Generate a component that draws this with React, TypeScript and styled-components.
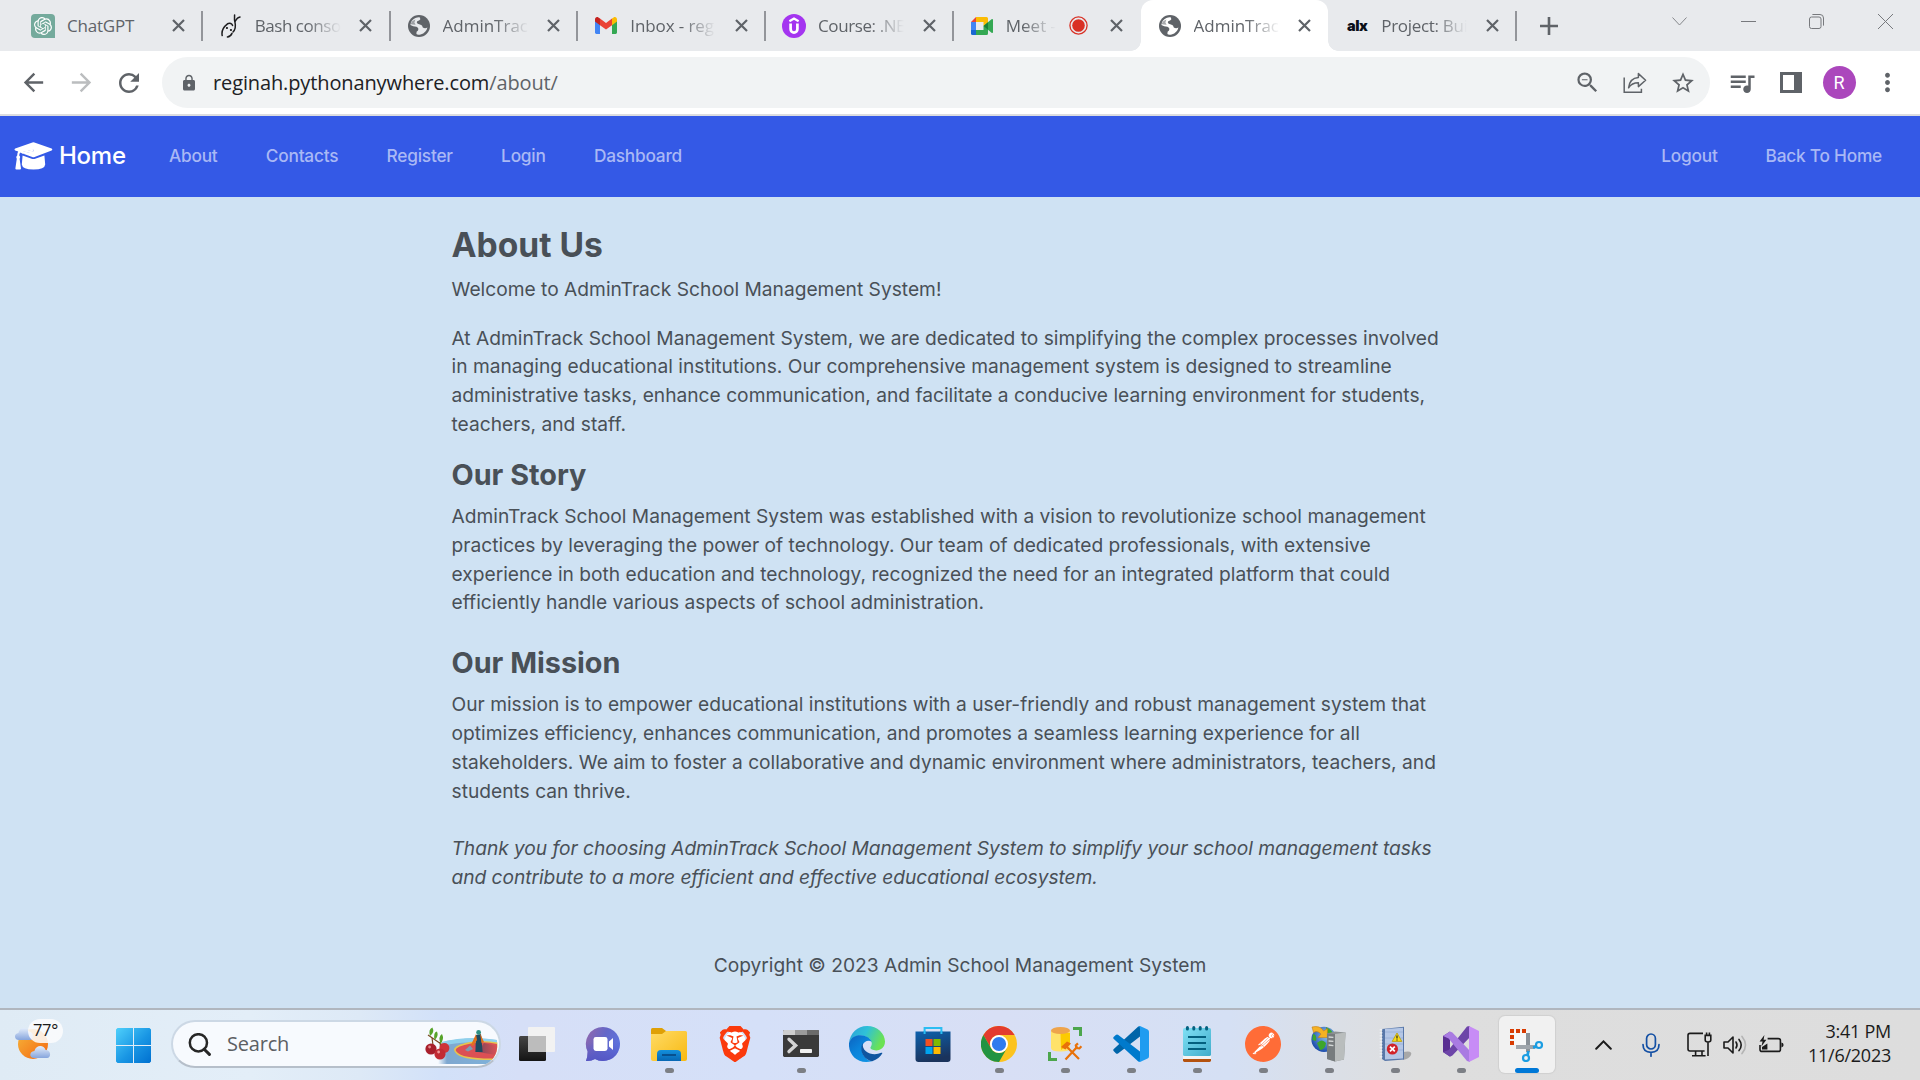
import React from "react";
import styled, { createGlobalStyle, css } from "styled-components";
import { SiOpenai, SiBrave, SiPostman } from "react-icons/si";
import {
  MdArrowBack,
  MdArrowForward,
  MdRefresh,
  MdLock,
  MdZoomOut,
  MdStarBorder,
  MdQueueMusic,
  MdMoreVert,
} from "react-icons/md";

const GlobalStyle = createGlobalStyle`
  * { box-sizing: border-box; }
  html, body { margin: 0; padding: 0; }
  body { width: 1920px; height: 1080px; overflow: hidden; }
  svg { display: block; flex: none; }
`;

const UI_FONT = `"Open Sans", "Noto Sans", sans-serif`;

const Screen = styled.div`
  width: 1920px;
  height: 1080px;
  display: flex;
  flex-direction: column;
  overflow: hidden;
  background: #cfe2f3;
`;

/* ---------- Tab strip ---------- */

const TabStrip = styled.div`
  height: 51px;
  flex: none;
  display: flex;
  background: #e8eaed;
  padding-left: 14px;
`;

const Tab = styled.div<{ $active?: boolean; $divider?: boolean }>`
  position: relative;
  width: 187.75px;
  height: 51px;
  flex: none;
  display: flex;
  align-items: center;
  padding-left: 15px;
  font-family: ${UI_FONT};
  font-size: 17px;
  color: #5f6368;
  ${(p) =>
    p.$divider &&
    css`
      &::after {
        content: "";
        position: absolute;
        right: -1px;
        top: 11px;
        width: 2px;
        height: 30px;
        background: #93959a;
      }
    `}
  ${(p) =>
    p.$active &&
    css`
      background: #fff;
      border-radius: 12px 12px 0 0;
      &::before,
      &::after {
        content: "";
        position: absolute;
        bottom: 0;
        width: 10px;
        height: 10px;
      }
      &::before {
        left: -10px;
        background: radial-gradient(circle at 0 0, transparent 9.5px, #fff 10px);
      }
      &::after {
        right: -10px;
        background: radial-gradient(circle at 100% 0, transparent 9.5px, #fff 10px);
      }
    `}
`;

const Favicon = styled.div`
  width: 28px;
  height: 26px;
  flex: none;
  display: flex;
  align-items: center;
  justify-content: center;
`;

const TabTitle = styled.div<{ $width: number; $fade: boolean; $spacing: number }>`
  margin-left: 10px;
  width: ${(p) => p.$width}px;
  line-height: 26px;
  white-space: nowrap;
  overflow: hidden;
  letter-spacing: ${(p) => p.$spacing}px;
  ${(p) =>
    p.$fade &&
    css`
      mask-image: linear-gradient(90deg, #000 calc(100% - 34px), transparent 100%);
    `}
`;

const RecordingSlot = styled.div`
  width: 36px;
  padding-left: 9px;
  display: flex;
  justify-content: center;
`;

const TabClose = styled.div`
  width: 24px;
  margin-left: 13px;
  display: flex;
  justify-content: center;
`;

const NewTab = styled.div`
  width: 66px;
  height: 51px;
  display: flex;
  align-items: center;
  justify-content: center;
`;

const WindowControls = styled.div`
  margin-left: auto;
  height: 43px;
  display: flex;
  align-items: center;
`;

const WindowButton = styled.div`
  width: 68.7px;
  display: flex;
  justify-content: center;
`;

/* ---------- Toolbar ---------- */

const Toolbar = styled.div`
  height: 65px;
  flex: none;
  display: flex;
  align-items: center;
  background: #fff;
  border-bottom: 2px solid #dcdde0;
  color: #5f6368;
  padding-left: 9px;
`;

const ToolButton = styled.div<{ $width?: number; $dim?: boolean }>`
  width: ${(p) => p.$width ?? 48}px;
  display: flex;
  justify-content: center;
  color: ${(p) => (p.$dim ? "#bbbdbf" : "#5f6368")};
`;

const Omnibox = styled.div`
  margin-left: 9px;
  width: 1548px;
  height: 51px;
  border-radius: 26px;
  background: #f1f3f4;
  display: flex;
  align-items: center;
  padding: 0 3px 0 15px;
  font-family: ${UI_FONT};
`;

const Url = styled.div`
  margin-left: 12px;
  flex: 1;
  font-size: 20px;
  line-height: 28px;
  letter-spacing: -0.12px;
  color: #202124;
  white-space: nowrap;
`;

const UrlPath = styled.span`
  color: #5f6368;
`;

const Avatar = styled.div`
  width: 33px;
  height: 33px;
  border-radius: 50%;
  background: #ab47bc;
  color: #fff;
  font-family: Roboto, sans-serif;
  font-size: 18px;
  line-height: 34px;
  text-align: center;
`;

/* ---------- Site ---------- */

const Navbar = styled.nav`
  height: 81px;
  flex: none;
  display: flex;
  align-items: center;
  background: #3459e6;
  padding: 0 38px 2px 14px;
  font-family: Inter, sans-serif;
`;

const Brand = styled.div`
  display: flex;
  align-items: center;
  gap: 6px;
  width: 131px;
  color: #fff;
  font-size: 24px;
  font-weight: 500;
  letter-spacing: -0.25px;
  line-height: 36px;
`;

const NavLinks = styled.div<{ $right?: boolean }>`
  display: flex;
  gap: ${(p) => (p.$right ? 48 : 48.3)}px;
  margin-left: ${(p) => (p.$right ? "auto" : "24px")};
`;

const NavLink = styled.a`
  color: #a9b8f5;
  font-size: 17.28px;
  font-weight: 500;
  line-height: 26px;
  letter-spacing: -0.22px;
  white-space: nowrap;
`;

const Page = styled.main`
  height: 811px;
  flex: none;
  background: #cfe2f3;
  padding: 28px 0 0 451.5px;
  font-family: Inter, sans-serif;
  font-size: 19.2px;
  line-height: 28.8px;
  color: #495057;
`;

const Heading = styled.h2<{ $size: number }>`
  margin: 0 0 9.6px;
  font-size: ${(p) => p.$size}px;
  font-weight: 700;
  line-height: 1.2;
`;

const Paragraph = styled.p<{ $gap: number; $italic?: boolean }>`
  margin: 0 0 ${(p) => p.$gap}px;
  font-style: ${(p) => (p.$italic ? "italic" : "normal")};
  letter-spacing: ${(p) => (p.$italic ? "-0.05px" : "normal")};
`;

const Line = styled.span`
  display: block;
  white-space: nowrap;
`;

const Footer = styled.footer`
  padding-top: 59px;
  margin-left: -451.5px;
  text-align: center;
`;

/* ---------- Taskbar ---------- */

const Taskbar = styled.div`
  height: 72px;
  flex: none;
  display: flex;
  align-items: center;
  border-top: 2px solid #b0b6be;
  background: linear-gradient(
    90deg,
    #dfebf5 0,
    #e3eef8 250px,
    #dde9f6 360px,
    #d2e1f9 440px,
    #d6dff7 520px,
    #d5e0f8 760px,
    #d8dff5 1000px,
    #d5e0f4 1230px,
    #dbdfe6 1340px,
    #dedede 1420px,
    #dddddd 1920px
  );
  font-family: ${UI_FONT};
`;

const Weather = styled.div`
  position: relative;
  width: 108px;
  padding-left: 14px;
`;

const Temperature = styled.div`
  position: absolute;
  left: 28px;
  top: -8px;
  width: 35px;
  height: 24px;
  border-radius: 12px;
  background: rgba(252, 252, 253, 0.86);
  font-size: 16.5px;
  line-height: 22px;
  letter-spacing: -0.3px;
  text-align: center;
  color: #1b1b1b;
`;

const StartButton = styled.div`
  width: 50px;
  display: flex;
  justify-content: center;
`;

const SearchBox = styled.div`
  margin-left: 13px;
  width: 330px;
  height: 48px;
  margin-top: -2px;
  border-radius: 24px;
  border: 2px solid #ccd8e5;
  border-bottom-color: #b6bfca;
  background: #f7fafe;
  display: flex;
  align-items: center;
  padding-left: 15px;
  overflow: hidden;
`;

const SearchLabel = styled.div`
  margin-left: 16px;
  flex: 1;
  font-size: 20px;
  line-height: 26px;
  letter-spacing: -0.2px;
  color: #5c5f63;
`;

const Apps = styled.div`
  margin-left: 3px;
  display: flex;
`;

const AppSlot = styled.div`
  width: 66px;
  height: 70px;
  display: flex;
  justify-content: center;
`;

const AppTile = styled.div<{ $focused?: boolean }>`
  width: 56px;
  height: 57px;
  margin-top: 6px;
  padding-top: 10px;
  border-radius: 6px;
  display: flex;
  flex-direction: column;
  align-items: center;
  background: ${(p) => (p.$focused ? "#f1f1f1" : "transparent")};
  box-shadow: ${(p) => (p.$focused ? "0 0 1px 1px #d0d0d0" : "none")};
`;

const RunningMark = styled.div<{ $focused?: boolean }>`
  margin-top: 6px;
  width: ${(p) => (p.$focused ? 24 : 9)}px;
  height: 5px;
  border-radius: 3px;
  background: ${(p) => (p.$focused ? "#0078d7" : "#7c7f85")};
`;

const Tray = styled.div`
  margin-left: 19px;
  margin-top: -1px;
  display: flex;
  align-items: center;
`;

const TrayItem = styled.div<{ $width: number }>`
  width: ${(p) => p.$width}px;
  display: flex;
  justify-content: center;
`;

const Clock = styled.div`
  margin: -4px 29px 0 auto;
  text-align: right;
  font-size: 18px;
  line-height: 24px;
  letter-spacing: -0.25px;
  color: #1b1b1b;
`;

/* ---------- Tab icons ---------- */

const OpenAiTile = styled.div`
  width: 24px;
  height: 24px;
  border-radius: 4px 4px 0 4px;
  background: #74aa9c;
  color: #fff;
  display: flex;
  align-items: center;
  justify-content: center;
`;

const AlxMark = styled.div`
  font-family: Inter, sans-serif;
  font-weight: 900;
  font-size: 14.5px;
  letter-spacing: -0.4px;
  color: #0b0f19;
`;

const GlobeIcon = ({ land = "#e8eaed" }: { land?: string }) => (
  <svg width="22" height="22" viewBox="0 0 22 22">
    <circle cx="11" cy="11" r="11" fill="#5f6368" />
    <path
      d="M12 2.4 Q13 4.6 11 5.6 Q8.6 6 8.8 7.6 Q9 9.4 12 9.4 Q14.6 10 14.8 12.6 Q17.4 13.8 19.4 12.4 Q18.4 17.6 12.6 19.4 Q9.4 20 8.4 19 Q8 16.2 10 15.4 Q11.2 13 8.4 11.8 Q5 11.6 2.4 10 Q2.8 5 7.4 3 Q9.8 2 12 2.4 Z"
      fill={land}
    />
    <path d="M2.4 9 Q4 5.6 7.4 4.6 L6.4 7.4 L7.6 9.8 L4.4 9.4 Z" fill="#5f6368" opacity=".55" />
  </svg>
);

const SnakeIcon = () => (
  <svg width="20" height="24" viewBox="0 0 20 24" fill="none" stroke="#1d1d1f" strokeWidth="1.5" strokeLinecap="round">
    <path d="M1.2 21.5 C0.4 17.5 2.4 13 6.5 9.8 C9 8.6 11 9.8 11.6 11.4" />
    <path d="M13.6 1 C13.4 4 13.2 6 14 8.4 C15 13 14 16 12 18" />
    <path d="M11 19.4 C10 21.6 8.4 22.8 6.4 23" />
    <path d="M19 3 C17.6 3.2 15.6 4.8 14.2 7.2" />
    <path d="M5.8 14 h.3 M9.8 16 h.3" strokeWidth="1.9" />
  </svg>
);

const GmailIcon = () => (
  <svg width="22" height="17" viewBox="0 0 22 17">
    <path d="M0 3 L5 6.6 V17 H1.4 A1.4 1.4 0 0 1 0 15.6 Z" fill="#4285f4" />
    <path d="M22 3 L17 6.6 V17 H20.6 A1.4 1.4 0 0 0 22 15.6 Z" fill="#34a853" />
    <path d="M17 1.5 L18.6 .5 C20.2 -.6 22 .5 22 2.4 V4.4 L17 8.2 Z" fill="#fbbc04" />
    <path d="M5 1.5 L11 6 L17 1.5 V8.2 L11 12.6 L5 8.2 Z" fill="#ea4335" />
    <path d="M0 2.4 C0 .5 1.8 -.6 3.4 .5 L5 1.5 V8.2 L0 4.4 Z" fill="#c5221f" />
  </svg>
);

const UdemyIcon = () => (
  <svg width="24" height="24" viewBox="0 0 24 24">
    <circle cx="12" cy="12" r="12" fill="#a435f0" />
    <path d="M7.4 7.2 L12 4.5 L16.6 7.2" fill="none" stroke="#fff" strokeWidth="2.2" />
    <path d="M8.6 9.6 V15 a3.4 3.6 0 0 0 6.8 0 V9.6" fill="none" stroke="#fff" strokeWidth="2.7" />
  </svg>
);

const MeetIcon = () => (
  <svg width="22" height="18" viewBox="0 0 22 18">
    <path d="M0 5 L5 0 V5 Z" fill="#ea4335" />
    <path d="M5 0 H15.5 A1.5 1.5 0 0 1 17 1.5 V6 L12.5 9 V5 H5 Z" fill="#fbbc04" />
    <path d="M0 5 H5 V13 H0 Z" fill="#4285f4" />
    <path d="M0 13 H5 V18 H1.5 A1.5 1.5 0 0 1 0 16.5 Z" fill="#1967d2" />
    <path d="M5 13 H12.5 V9 L17 12 V16.5 A1.5 1.5 0 0 1 15.5 18 H5 Z" fill="#34a853" />
    <path d="M12.5 9 L20.5 2.2 Q22 1.3 22 3 V15 Q22 16.7 20.5 15.8 Z" fill="#34a853" />
    <path d="M12.5 9 L17 5.2 V12.8 Z" fill="#188038" />
  </svg>
);

const RecordingIcon = () => (
  <svg width="19" height="19" viewBox="0 0 19 19">
    <circle cx="9.5" cy="9.5" r="8.6" fill="none" stroke="#d93025" strokeWidth="1.3" />
    <circle cx="9.5" cy="9.5" r="6.3" fill="#d93025" />
  </svg>
);

const CloseIcon = () => (
  <svg width="13" height="13" viewBox="0 0 13 13" stroke="#5f6368" strokeWidth="2.2">
    <path d="M1 1 L12 12 M12 1 L1 12" />
  </svg>
);

/* ---------- Toolbar and site icons ---------- */

const ShareIcon = () => (
  <svg width="24" height="22" viewBox="0 0 24 22" fill="none" stroke="#5f6368" strokeWidth="1.5">
    <path d="M1.2 5.5 V20.2 H18.4 V16.8" />
    <path d="M5.6 15.8 C6.2 9.8 9.4 5.8 15.4 5.4 V1.6 L22.6 8.2 L15.4 14.6 V10.8 C10.8 10.8 7.8 12.4 5.6 15.8 Z" strokeLinejoin="round" />
  </svg>
);

const SidePanelIcon = () => (
  <svg width="22" height="21" viewBox="0 0 22 21">
    <path d="M0 0 H22 V21 H0 Z M3 3 V18 H14 V3 Z" fill="#5f6368" fillRule="evenodd" />
  </svg>
);

const CapIcon = () => (
  <svg width="39" height="28" viewBox="0 0 39 28" fill="#fff">
    <path d="M18.4 .5 Q19.4 .2 20.4 .5 L37.6 6.6 Q39 7.4 37.6 8.4 L20.6 15 Q19.4 15.4 18.2 15 L8.6 11.6 L19.6 9.2 L19.4 7.8 L6.4 10.4 Q5.2 11.4 5.2 13.6 Q6.8 15 5.6 16.8 L7 26.4 Q7 27.4 6 27.4 H2.4 Q1.2 27.4 1.4 26.2 L2.8 16.8 Q1.6 15 3.2 13.6 Q3.2 11 4.2 9.6 L1.2 8.4 Q-.2 7.4 1.2 6.6 Z" />
    <path d="M19.2 7.6 L6 10.2 L8.6 11.8 L19.8 9.4 Z" />
    <path d="M8.6 13.4 L17.6 16.8 Q19.4 17.4 21.2 16.8 L30.4 13.4 L31.2 22.4 Q30.8 27.4 19.5 27.5 Q8.4 27.4 7.8 22.4 Z" />
  </svg>
);

/* ---------- Taskbar icons ---------- */

const WeatherIcon = () => (
  <svg width="40" height="36" viewBox="0 0 40 36">
    <defs>
      <linearGradient id="sun" x1="0" y1="0" x2="1" y2="1">
        <stop offset="0" stopColor="#f6b73c" />
        <stop offset="1" stopColor="#f4660f" />
      </linearGradient>
      <linearGradient id="cloud" x1="0" y1="0" x2="0" y2="1">
        <stop offset="0" stopColor="#e3edfb" />
        <stop offset="1" stopColor="#86a5dd" />
      </linearGradient>
    </defs>
    <circle cx="19" cy="17" r="15" fill="url(#sun)" />
    <path d="M5 13 C0 13 -.5 6.5 4.4 6 C5.6 -.4 13 -.8 15 4.6 C20 4.6 20 13 16 13 Z" fill="url(#cloud)" />
    <path d="M20 31 C15 31 15 24.4 20.4 24 C22 17.6 30 17.6 31.6 23 C37.4 23 37.4 31 33 31 Z" fill="url(#cloud)" />
  </svg>
);

const WindowsIcon = () => (
  <svg width="35" height="35" viewBox="0 0 35 35">
    <defs>
      <linearGradient id="win" gradientUnits="userSpaceOnUse" x1="0" y1="0" x2="35" y2="35">
        <stop offset="0" stopColor="#4fd0fb" />
        <stop offset=".55" stopColor="#1996e4" />
        <stop offset="1" stopColor="#0070d0" />
      </linearGradient>
    </defs>
    <path d="M1.5 0 H17 V17 H0 V1.5 Z M18 0 H33.5 L35 1.5 V17 H18 Z M0 18 H17 V35 H1.5 L0 33.5 Z M18 18 H35 V33.5 L33.5 35 H18 Z" fill="url(#win)" />
  </svg>
);

const MagnifierIcon = () => (
  <svg width="23" height="23" viewBox="0 0 23 23" fill="none" stroke="#262626" strokeWidth="2.5" strokeLinecap="round">
    <circle cx="10.4" cy="9.8" r="8.6" />
    <path d="M16.2 16.2 L21.4 21.4" strokeWidth="3" />
  </svg>
);

const SearchArt = () => (
  <svg width="75" height="44" viewBox="0 0 75 44">
    <defs>
      <linearGradient id="water" x1="0" y1="0" x2="1" y2="0">
        <stop offset="0" stopColor="#7fa8d0" stopOpacity="0" />
        <stop offset=".15" stopColor="#7fa8d0" />
        <stop offset="1" stopColor="#7fb2da" />
      </linearGradient>
      <linearGradient id="raftShade" x1="0" y1="0" x2="1" y2="0">
        <stop offset="0" stopColor="#33405e" stopOpacity=".55" />
        <stop offset="1" stopColor="#33405e" stopOpacity="0" />
      </linearGradient>
    </defs>
    <path d="M14 42 L18 20 Q44 14 73 18 Q75 30 64 42 Z" fill="url(#water)" />
    <path d="M18 20 Q44 13 73 18 V24 Q44 17 18 24 Z" fill="#8fd0ec" />
    <path d="M73.4 20.4 Q60 17.6 46 20 Q30 23 30 28 Q32 37 60 38 L68 38 Q74 30 73.4 20.4 Z" fill="#e8c44c" />
    <path d="M73 22 Q60 19 47 21.4 Q32 24 31.6 28 Q34 35.6 60 36.4 L69 36.4 Q74 30 73 22 Z" fill="#dc5054" />
    <path d="M54 30 L60 21 L73 24 L72 33 Z" fill="url(#raftShade)" />
    <path d="M52 13 L57 12 L58.6 30 H51.4 Z" fill="#1f4a60" />
    <path d="M52 12 L47 23 L49 24 L53 18 Z M56 11 L60 20 L57.6 21 Z" fill="#e2711d" />
    <circle cx="54.6" cy="10.4" r="2.4" fill="#2d8f82" />
    <path d="M41 28 L46 23.6 L49 27 L44 29.4 Z" fill="#7d9bb2" />
    <path d="M4 13 L20 24 M8 16 L9 23 M16 20 L17 30" stroke="#7a4a24" strokeWidth="1.2" fill="none" />
    <path d="M6 14 Q4 7 8.4 5.4 Q11 10 6 14 Z M10.6 18 Q9 10 13 9.4 Q15 14 10.6 18 Z M16.4 22 Q14 14 18 12 Q20.6 17 16.4 22 Z" fill="#56a329" />
    <circle cx="7" cy="27" r="5.6" fill="#a81f2c" />
    <circle cx="20.4" cy="26" r="5" fill="#cf3438" />
    <circle cx="16" cy="32" r="5.6" fill="#c22b34" />
    <circle cx="5.6" cy="25" r="1.4" fill="#e58a8d" />
    <circle cx="14.6" cy="30" r="1.4" fill="#ee9a9a" />
  </svg>
);

const TaskViewIcon = () => (
  <svg width="36" height="36" viewBox="0 0 36 36">
    <defs>
      <linearGradient id="tvDark" x1="0" y1="0" x2="0" y2="1">
        <stop offset="0" stopColor="#454545" />
        <stop offset="1" stopColor="#141414" />
      </linearGradient>
    </defs>
    <rect x="0" y="10" width="27" height="25" rx="1.5" fill="url(#tvDark)" />
    <rect x="9" y="1" width="27" height="25" rx="1" fill="#f2f2f2" />
    <path d="M9 10 H27 V26 H10 L9 25 Z" fill="#bcbcbc" />
  </svg>
);

const ChatIcon = () => (
  <svg width="36" height="36" viewBox="0 0 36 36">
    <defs>
      <linearGradient id="chat" x1="0" y1=".2" x2="1" y2=".6">
        <stop offset="0" stopColor="#8f68ae" />
        <stop offset=".5" stopColor="#6467c8" />
        <stop offset="1" stopColor="#5d75e0" />
      </linearGradient>
      <linearGradient id="chatShade" x1="0" y1="0" x2="0" y2="1">
        <stop offset=".45" stopColor="#5558c8" stopOpacity="0" />
        <stop offset="1" stopColor="#5556c4" />
      </linearGradient>
    </defs>
    <path d="M18 1 A17 17 0 1 1 10 33 Q6 35.4 1 35 Q2.6 31 2.6 25.6 A17 17 0 0 1 18 1 Z" fill="url(#chat)" />
    <path d="M18 1 A17 17 0 1 1 10 33 Q6 35.4 1 35 Q2.6 31 2.6 25.6 A17 17 0 0 1 18 1 Z" fill="url(#chatShade)" />
    <rect x="8.5" y="11" width="14" height="14" rx="2.4" fill="#fff" />
    <path d="M24 15.6 L28 12 V24 L24 20.4 Z" fill="#fff" />
  </svg>
);

const FolderIcon = () => (
  <svg width="36" height="36" viewBox="0 0 36 36">
    <defs>
      <linearGradient id="folder" x1="0" y1="0" x2="1" y2="1">
        <stop offset="0" stopColor="#ffdb66" />
        <stop offset="1" stopColor="#f8b911" />
      </linearGradient>
      <linearGradient id="folderTab" x1="0" y1="0" x2="0" y2="1">
        <stop offset="0" stopColor="#1390dc" />
        <stop offset="1" stopColor="#0767b5" />
      </linearGradient>
    </defs>
    <path d="M0 3.5 Q0 2 1.5 2 H11 L15 5 V9 H0 Z" fill="#dfa006" />
    <path d="M0 8 H11 L15 5 H34.5 Q36 5 36 6.5 V33 Q36 35 34 35 H2 Q0 35 0 33 Z" fill="url(#folder)" />
    <path d="M6 35 V28 Q6 24 10 24 H26 Q30 24 30 28 V35 Z" fill="url(#folderTab)" />
    <rect x="11" y="28" width="14" height="2" fill="#07508f" />
  </svg>
);

const BraveTile = styled.div`
  width: 36px;
  height: 36px;
  color: #fb3a0c;
  background: radial-gradient(ellipse 11px 13px at 50% 48%, #fff 96%, transparent 100%);
`;

const BraveIcon = () => (
  <BraveTile>
    <SiBrave size={36} />
  </BraveTile>
);

const TerminalIcon = () => (
  <svg width="36" height="36" viewBox="0 0 36 36">
    <rect x="0" y="4" width="36" height="27" rx="1.4" fill="#3a3a3a" />
    <path d="M0 9 V5.4 Q0 4 1.4 4 H12 V9 Z" fill="#cfcfcf" />
    <rect x="12" y="4" width="12" height="5" fill="#9b9b9b" />
    <path d="M24 4 H34.6 Q36 4 36 5.4 V9 H24 Z" fill="#6b6b6b" />
    <path d="M6 13.2 L12.6 19.4 L6 25.6" fill="none" stroke="#d5d5d5" strokeWidth="3.4" strokeLinecap="round" />
    <rect x="17" y="23" width="12" height="4" rx=".8" fill="#f0f0f0" />
  </svg>
);

const EdgeIcon = () => (
  <svg width="36" height="36" viewBox="0 0 36 36">
    <defs>
      <linearGradient id="edgeTop" x1="0" y1="0" x2="1" y2=".35">
        <stop offset="0" stopColor="#2a9fd8" />
        <stop offset=".5" stopColor="#2fc1d8" />
        <stop offset="1" stopColor="#6ae254" />
      </linearGradient>
      <linearGradient id="edgeLow" x1="0" y1="0" x2=".8" y2="1">
        <stop offset="0" stopColor="#0c62bf" />
        <stop offset=".5" stopColor="#0a83da" />
        <stop offset="1" stopColor="#1093e4" />
      </linearGradient>
    </defs>
    <path d="M0 17 C1 7 8.6 0 18 0 C28.6 0 36 7.6 36 15.6 C36 21 32 24.4 27.2 24.4 C23.6 24.4 21.4 23 21.4 21.8 C21.4 20.8 22.8 20.2 22.8 17.6 C22.8 13 17.6 9.4 11.6 9.4 C6 9.4 1.6 12.4 0 17 Z" fill="url(#edgeTop)" />
    <path d="M0 17 C2 11 7 9 11.6 9.2 C18 9.4 22 13 22.8 16 C20 13.6 15 15 13.4 19.6 C11 27 17 34.6 23 35.2 C9 39 -1 28.6 0 17 Z" fill="url(#edgeLow)" />
    <path d="M13.8 16.8 C9.4 25 15.6 34.4 23.2 35.2 C28 33.8 31.6 30.6 33.2 27.6 C33.6 26.8 33 26.4 32.2 26.8 C24.6 30.4 12.4 27 13.8 16.8 Z" fill="#0f55a0" />
  </svg>
);

const StoreIcon = () => (
  <svg width="36" height="36" viewBox="0 0 36 36">
    <defs>
      <linearGradient id="store" x1="0" y1="0" x2=".3" y2="1">
        <stop offset="0" stopColor="#0d62ae" />
        <stop offset="1" stopColor="#1a335c" />
      </linearGradient>
    </defs>
    <path d="M9.6 8 V2 H26.4 V8" fill="none" stroke="#2bbdf2" strokeWidth="2" />
    <path d="M.5 5.5 H35.5 V33 Q35.5 36 32.5 36 H3.5 Q.5 36 .5 33 Z" fill="url(#store)" />
    <path d="M9.6 5 V8 M26.4 5 V8" stroke="#2bbdf2" strokeWidth="2" />
    <rect x="10.5" y="13" width="7" height="7" fill="#f25022" />
    <rect x="18.5" y="13" width="7" height="7" fill="#7fba00" />
    <rect x="10.5" y="21" width="7" height="7" fill="#00a4ef" />
    <rect x="18.5" y="21" width="7" height="7" fill="#ffb900" />
  </svg>
);

const ChromeIcon = () => (
  <svg width="36" height="36" viewBox="0 0 36 36">
    <circle cx="18" cy="18" r="18" fill="#fcc31e" />
    <path d="M2.4 9 A18 18 0 0 1 33.6 9 H18 A9 9 0 0 0 10.2 22.5 Z" fill="#e33b2e" />
    <path d="M2.4 9 L10.2 22.5 A9 9 0 0 0 25.8 22.5 L18 36 A18 18 0 0 1 2.4 9 Z" fill="#229342" />
    <circle cx="18" cy="18" r="9" fill="#fff" />
    <circle cx="18" cy="18" r="7.1" fill="#2f7bee" />
  </svg>
);

const SsmsIcon = () => (
  <svg width="36" height="36" viewBox="0 0 36 36">
    <path d="M4 4.5 V22 Q4 25.5 13.5 25.5 T23 22 V4.5 Z" fill="#ffe26a" />
    <path d="M13.5 7 H23 V18 L14 24 Z" fill="#fccb00" />
    <ellipse cx="13.5" cy="4.5" rx="9.5" ry="3.6" fill="#eea44c" />
    <path d="M26 1 H35 V10 H32 V4 H26 Z M1 26 H4 V32 H10 V35 H1 Z" fill="#4ca64c" />
    <path d="M18.5 33.6 L30.5 20.5 M19.5 20.5 L32 33" stroke="#e8710a" strokeWidth="2.2" />
    <path d="M14 21 L20 15.6 L24 17.6 L18.4 23.4 Z" fill="#e8710a" />
    <path d="M31 17.4 L28.8 19.4 L29.6 22 L32.4 22.4 L34.4 20.2" fill="none" stroke="#e8710a" strokeWidth="2.2" />
  </svg>
);

const VsCodeIcon = () => (
  <svg width="36" height="36" viewBox="0 0 36 36">
    <path d="M27 0 V10.4 L5 27.4 Q3.8 28.2 2.8 27.2 L.6 25 Q-.2 24 .8 23 L25 .8 Z" fill="#0065a9" />
    <path d="M27 36 V25.6 L5 8.8 Q3.8 8 2.8 9 L.6 11 Q-.2 12 .8 13 L25 35.2 Z" fill="#007acc" />
    <path d="M27 0 L34.6 3.4 Q36 4.2 36 5.8 V30.2 Q36 31.8 34.6 32.6 L27 36 Q25.6 35.6 25 35.2 Q27 35.6 27 33.6 V2.4 Q27 .4 25 .8 Z" fill="#1f9cf0" />
  </svg>
);

const NotepadIcon = () => (
  <svg width="36" height="36" viewBox="0 0 36 36">
    <defs>
      <linearGradient id="note" x1="0" y1="0" x2="1" y2="1">
        <stop offset="0" stopColor="#80e0f5" />
        <stop offset="1" stopColor="#41adcb" />
      </linearGradient>
    </defs>
    <rect x="4" y="29" width="28" height="7" rx="1.4" fill="#b4520f" />
    <rect x="4" y="28" width="28" height="5" fill="#f4f4f4" />
    <rect x="4" y="2" width="28" height="28" rx="1.6" fill="url(#note)" />
    <path d="M9 11 H27 M9 17 H27 M9 23 H27" stroke="#04607f" strokeWidth="2" />
    <path d="M8.4 1.6 V3 M14.8 1.6 V3 M21.2 1.6 V3 M27.6 1.6 V3" stroke="#04607f" strokeWidth="3" strokeLinecap="round" />
  </svg>
);

const PostmanTile = styled.div`
  width: 36px;
  height: 36px;
  border-radius: 50%;
  color: #ff6c37;
  background: radial-gradient(circle, #fff 60%, transparent 62%);
`;

const PostmanIcon = () => (
  <PostmanTile>
    <SiPostman size={36} />
  </PostmanTile>
);

const IisIcon = () => (
  <svg width="36" height="36" viewBox="0 0 36 36">
    <defs>
      <radialGradient id="earth" cx=".6" cy=".35" r=".7">
        <stop offset="0" stopColor="#8fc6f2" />
        <stop offset="1" stopColor="#1646a8" />
      </radialGradient>
    </defs>
    <circle cx="13" cy="13.4" r="12.6" fill="url(#earth)" />
    <path d="M15 1 Q22 4 22 9 Q18 12 16 7 Z M6 17 Q11 12 15 17 Q14 24 9 24 Z M2 8 Q6 8 5 15 L1.4 14 Z" fill="#3da62c" />
    <path d="M1 1 Q9 -1 12.6 5 L16.4 2.6 V11.6 H7 L10 8 Q6 4 2.6 6.6 Z" fill="#f5b223" stroke="#c67c10" strokeWidth=".6" />
    <path d="M16 7.6 L24 5.4 L34.6 6.4 L33 33.4 L24 35.6 L16 33 Z" fill="#8d9294" />
    <path d="M24 8 L34.6 6.4 L33 33.4 L24 35.6 Z" fill="#b9bdbd" />
    <path d="M16 7.6 L24 8 V35.6 L16 33 Z" fill="#777c7e" />
    <path d="M17.6 11 L22.4 11.4 M17.6 15 L22.4 15.4 M17.6 19 L22.4 19.6" stroke="#d4d8d8" strokeWidth="1.4" />
  </svg>
);

const EventLogIcon = () => (
  <svg width="36" height="36" viewBox="0 0 36 36">
    <path d="M26 26 Q36 24 34 29 Q32 33 26 34 Z" fill="#a8a8a8" />
    <path d="M5 3 L27 .8 V33.4 L8 35 L5 33 Z" fill="#5877a8" />
    <path d="M8 3 L26 1.8 V32.4 L8 33.4 Z" fill="#b5c7e6" />
    <path d="M8 6 H26 M8 12 H26 M8 18 H26 M8 24 H26" stroke="#9cb2d8" />
    <path d="M4 3 V32" stroke="#eceff4" strokeWidth="2.6" strokeDasharray="1.6 1.4" />
    <circle cx="15.4" cy="23" r="5.6" fill="#d1232a" />
    <path d="M13 20.6 L17.8 25.4 M17.8 20.6 L13 25.4" stroke="#fff" strokeWidth="1.7" />
    <path d="M20 7 L24.8 15.4 H15.2 Z" fill="#f9dc14" stroke="#b79a06" strokeWidth=".8" />
    <path d="M20 9.6 V12.6 M20 13.4 V14.4" stroke="#222" strokeWidth="1.2" />
  </svg>
);

const VisualStudioIcon = () => (
  <svg width="36" height="36" viewBox="0 0 36 36">
    <path d="M0 10 L7 5.4 V30.4 L0 26 Z" fill="#5a2f92" />
    <path d="M7 30.8 L0 26 L5.6 24 L24 .6 L27 0 V11 L9.4 29.4 Z" fill="#6d45a8" />
    <path d="M0 10 L7 5.4 L9.4 6.4 L27 25 V36 L24 35 L5.6 12.4 Z" fill="#a97be2" />
    <path d="M26 0 L36 5 V31 L26 36 Z" fill="#c78cf6" />
  </svg>
);

const SnipIcon = () => (
  <svg width="36" height="36" viewBox="0 0 36 36">
    <rect x="5" y="5" width="14" height="14" fill="#f8f8f8" />
    <path d="M1 5 H17" stroke="#d83b01" strokeWidth="4" strokeDasharray="4 2" />
    <path d="M3 9 V19" stroke="#d83b01" strokeWidth="4" strokeDasharray="4 2" />
    <path d="M19 7 V26" stroke="#8b9299" strokeWidth="4" />
    <path d="M7 21 H26" stroke="#a0a6ac" strokeWidth="4" />
    <circle cx="30" cy="19" r="3" fill="none" stroke="#1b9de2" strokeWidth="2.2" />
    <circle cx="17" cy="32" r="3" fill="none" stroke="#1b9de2" strokeWidth="2.2" />
    <path d="M24 21.4 L28 20.6 M19.4 25 L18.6 29" stroke="#1b9de2" strokeWidth="2.8" />
  </svg>
);

/* ---------- Data ---------- */

type TabInfo = {
  title: string;
  icon: React.ReactNode;
  active?: boolean;
  divider?: boolean;
  fade?: boolean;
  recording?: boolean;
  spacing?: number;
};

const tabs: TabInfo[] = [
  { title: "ChatGPT", icon: <OpenAiTile><SiOpenai size={18} /></OpenAiTile>, divider: true, spacing: -0.2 },
  { title: "Bash conso", icon: <SnakeIcon />, divider: true, fade: true, spacing: -0.45 },
  { title: "AdminTrac", icon: <GlobeIcon />, divider: true, fade: true },
  { title: "Inbox - reg", icon: <GmailIcon />, divider: true, fade: true, spacing: -0.1 },
  { title: "Course: .NE", icon: <UdemyIcon />, divider: true, fade: true, spacing: -0.4 },
  { title: "Meet -", icon: <MeetIcon />, fade: true, recording: true },
  { title: "AdminTrac", icon: <GlobeIcon land="#fff" />, active: true, fade: true },
  { title: "Project: Bui", icon: <AlxMark>alx</AlxMark>, divider: true, fade: true, spacing: -0.3 },
];

type Section = { title: string; size: number; blocks: { lines: string[]; gap: number; italic?: boolean }[] };

const sections: Section[] = [
  {
    title: "About Us",
    size: 33.6,
    blocks: [
      { lines: ["Welcome to AdminTrack School Management System!"], gap: 19.8 },
      {
        lines: [
          "At AdminTrack School Management System, we are dedicated to simplifying the complex processes involved",
          "in managing educational institutions. Our comprehensive management system is designed to streamline",
          "administrative tasks, enhance communication, and facilitate a conducive learning environment for students,",
          "teachers, and staff.",
        ],
        gap: 19.2,
      },
    ],
  },
  {
    title: "Our Story",
    size: 28.8,
    blocks: [
      {
        lines: [
          "AdminTrack School Management System was established with a vision to revolutionize school management",
          "practices by leveraging the power of technology. Our team of dedicated professionals, with extensive",
          "experience in both education and technology, recognized the need for an integrated platform that could",
          "efficiently handle various aspects of school administration.",
        ],
        gap: 28.8,
      },
    ],
  },
  {
    title: "Our Mission",
    size: 28.8,
    blocks: [
      {
        lines: [
          "Our mission is to empower educational institutions with a user-friendly and robust management system that",
          "optimizes efficiency, enhances communication, and promotes a seamless learning experience for all",
          "stakeholders. We aim to foster a collaborative and dynamic environment where administrators, teachers, and",
          "students can thrive.",
        ],
        gap: 28.8,
      },
      {
        lines: [
          "Thank you for choosing AdminTrack School Management System to simplify your school management tasks",
          "and contribute to a more efficient and effective educational ecosystem.",
        ],
        gap: 0,
        italic: true,
      },
    ],
  },
];

type AppInfo = { icon: React.ReactNode; running?: boolean; focused?: boolean };

const apps: AppInfo[] = [
  { icon: <TaskViewIcon /> },
  { icon: <ChatIcon /> },
  { icon: <FolderIcon />, running: true },
  { icon: <BraveIcon /> },
  { icon: <TerminalIcon />, running: true },
  { icon: <EdgeIcon /> },
  { icon: <StoreIcon /> },
  { icon: <ChromeIcon />, running: true },
  { icon: <SsmsIcon />, running: true },
  { icon: <VsCodeIcon />, running: true },
  { icon: <NotepadIcon />, running: true },
  { icon: <PostmanIcon />, running: true },
  { icon: <IisIcon />, running: true },
  { icon: <EventLogIcon />, running: true },
  { icon: <VisualStudioIcon />, running: true },
  { icon: <SnipIcon />, running: true, focused: true },
];

export default function App() {
  return (
    <Screen>
      <GlobalStyle />
      <TabStrip>
        {tabs.map((t, i) => (
          <Tab key={i} $active={t.active} $divider={t.divider}>
            <Favicon>{t.icon}</Favicon>
            <TabTitle $width={t.recording ? 50 : 86} $fade={!!t.fade} $spacing={t.spacing ?? 0}>
              {t.title}
            </TabTitle>
            {t.recording && (
              <RecordingSlot>
                <RecordingIcon />
              </RecordingSlot>
            )}
            <TabClose>
              <CloseIcon />
            </TabClose>
          </Tab>
        ))}
        <NewTab>
          <svg width="18" height="18" viewBox="0 0 18 18" stroke="#5f6368" strokeWidth="2.6">
            <path d="M9 0 V18 M0 9 H18" />
          </svg>
        </NewTab>
        <WindowControls>
          <WindowButton>
            <svg width="15" height="9" viewBox="0 0 15 9" fill="none" stroke="#85878b">
              <path d="M.5 .5 L7.5 8 L14.5 .5" />
            </svg>
          </WindowButton>
          <WindowButton>
            <svg width="15" height="1" viewBox="0 0 15 1">
              <rect width="15" height="1" fill="#77797d" />
            </svg>
          </WindowButton>
          <WindowButton>
            <svg width="15" height="15" viewBox="0 0 15 15" fill="none" stroke="#77797d">
              <rect x=".5" y="3" width="11.5" height="11.5" rx="2" />
              <path d="M3.4 .5 H11 Q14.5 .5 14.5 4 V11.6" />
            </svg>
          </WindowButton>
          <WindowButton>
            <svg width="15" height="15" viewBox="0 0 15 15" stroke="#77797d">
              <path d="M0 0 L15 15 M15 0 L0 15" />
            </svg>
          </WindowButton>
        </WindowControls>
      </TabStrip>

      <Toolbar>
        <ToolButton>
          <MdArrowBack size={29} />
        </ToolButton>
        <ToolButton $dim>
          <MdArrowForward size={29} />
        </ToolButton>
        <ToolButton>
          <MdRefresh size={30} />
        </ToolButton>
        <Omnibox>
          <ToolButton $width={24}>
            <MdLock size={18} />
          </ToolButton>
          <Url>
            reginah.pythonanywhere.com<UrlPath>/about/</UrlPath>
          </Url>
          <ToolButton>
            <MdZoomOut size={27} />
          </ToolButton>
          <ToolButton>
            <ShareIcon />
          </ToolButton>
          <ToolButton>
            <MdStarBorder size={26} />
          </ToolButton>
        </Omnibox>
        <ToolButton $width={64}>
          <MdQueueMusic size={30} />
        </ToolButton>
        <ToolButton $width={34}>
          <SidePanelIcon />
        </ToolButton>
        <ToolButton $width={62}>
          <Avatar>R</Avatar>
        </ToolButton>
        <ToolButton $width={34}>
          <MdMoreVert size={29} />
        </ToolButton>
      </Toolbar>

      <Navbar>
        <Brand>
          <CapIcon />
          Home
        </Brand>
        <NavLinks>
          {["About", "Contacts", "Register", "Login", "Dashboard"].map((l) => (
            <NavLink key={l}>{l}</NavLink>
          ))}
        </NavLinks>
        <NavLinks $right>
          {["Logout", "Back To Home"].map((l) => (
            <NavLink key={l}>{l}</NavLink>
          ))}
        </NavLinks>
      </Navbar>

      <Page>
        {sections.map((s) => (
          <section key={s.title}>
            <Heading $size={s.size}>{s.title}</Heading>
            {s.blocks.map((b, j) => (
              <Paragraph key={j} $gap={b.gap} $italic={b.italic}>
                {b.lines.map((line) => (
                  <Line key={line}>{line}</Line>
                ))}
              </Paragraph>
            ))}
          </section>
        ))}
        <Footer>Copyright © 2023 Admin School Management System</Footer>
      </Page>

      <Taskbar>
        <Weather>
          <WeatherIcon />
          <Temperature>77°</Temperature>
        </Weather>
        <StartButton>
          <WindowsIcon />
        </StartButton>
        <SearchBox>
          <MagnifierIcon />
          <SearchLabel>Search</SearchLabel>
          <SearchArt />
        </SearchBox>
        <Apps>
          {apps.map((a, i) => (
            <AppSlot key={i}>
              <AppTile $focused={a.focused}>
                {a.icon}
                {a.running && <RunningMark $focused={a.focused} />}
              </AppTile>
            </AppSlot>
          ))}
        </Apps>
        <Tray>
          <TrayItem $width={48}>
            <svg width="17" height="10" viewBox="0 0 17 10" fill="none" stroke="#1b1b1b" strokeWidth="2" strokeLinecap="round">
              <path d="M1.2 8.8 L8.5 1.4 L15.8 8.8" />
            </svg>
          </TrayItem>
          <TrayItem $width={48}>
            <svg width="18" height="24" viewBox="0 0 18 24" fill="none" stroke="#1450a4" strokeWidth="1.7" strokeLinecap="round">
              <rect x="4.6" y="1" width="8.8" height="15" rx="4.4" />
              <path d="M1 11.6 Q1 19.4 9 19.4 T17 11.6 M9 19.4 V23.2" />
            </svg>
          </TrayItem>
          <TrayItem $width={48}>
            <svg width="25" height="25" viewBox="0 0 25 25" fill="none" stroke="#1b1b1b" strokeWidth="1.6">
              <path d="M16 1.4 H3 Q1 1.4 1 3.4 V17 Q1 19 3 19 H17.6 M8.6 19 V23.4 M15 19 V23.4 M5 23.8 H18.6" />
              <path d="M18.2 3.4 H23.8 V8 Q23.8 10 21 10 T18.2 8 Z M19.6 3.4 V.6 M22.4 3.4 V.6 M21 10 V24" />
            </svg>
          </TrayItem>
          <TrayItem $width={24}>
            <svg width="24" height="20" viewBox="0 0 24 20" fill="none" stroke="#1b1b1b" strokeWidth="1.6" strokeLinejoin="round" strokeLinecap="round">
              <path d="M1 7 H5 L10 2 V18 L5 13 H1 Z M13 7 Q15 10 13 13 M16 4.4 Q20.4 10 16 15.6" />
              <path d="M19 1.4 Q26 10 19 18.6" stroke="#b4b4b4" />
            </svg>
          </TrayItem>
          <TrayItem $width={48}>
            <svg width="25" height="20" viewBox="0 0 25 20" fill="none" stroke="#1b1b1b" strokeWidth="1.6">
              <path d="M8.6 3.6 H19.4 Q21.4 3.6 21.4 5.6 V14.4 Q21.4 16.4 19.4 16.4 H3 Q1 16.4 1 14.4 V10" />
              <path d="M22.4 7.6 Q24.6 8 24.6 10 T22.4 12.4 Z M5.4 0 L.6 6.6 H3.6 L2.4 11.4 L7.4 4.8 H4.6 Z" fill="#1b1b1b" stroke="none" />
              <path d="M3 14.6 V12 L8.4 8.4 V14.6 Z" fill="#1b1b1b" stroke="none" />
            </svg>
          </TrayItem>
        </Tray>
        <Clock>
          <div>3:41 PM</div>
          <div>11/6/2023</div>
        </Clock>
      </Taskbar>
    </Screen>
  );
}
